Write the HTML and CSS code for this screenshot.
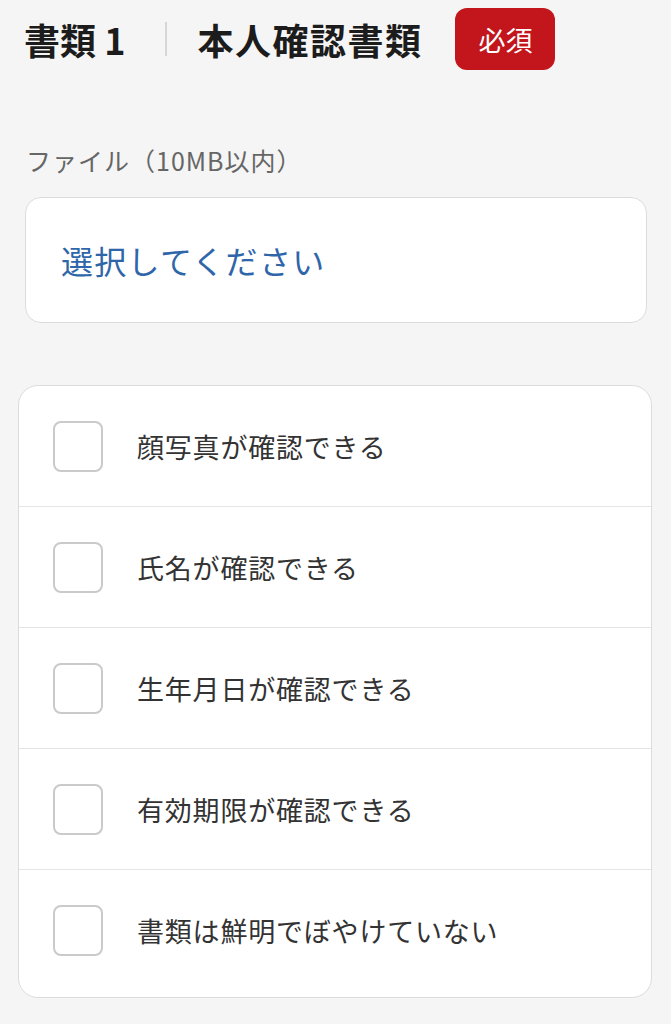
FILE: index.html
```html
<!DOCTYPE html>
<html lang="ja">
<head>
<meta charset="utf-8">
<link rel="stylesheet" href="styles.css">
</head>
<body>
<div class="page">
  <header class="doc-header">
    <span class="doc-num">書類 1</span>
    <span class="sep"></span>
    <span class="doc-title">本人確認書類</span>
    <span class="badge">必須</span>
  </header>

  <div class="field-label">ファイル（10MB以内）</div>
  <div class="select-box">選択してください</div>

  <ul class="checklist">
    <li class="check-row"><span class="checkbox"></span><span class="check-text">顔写真が確認できる</span></li>
    <li class="check-row"><span class="checkbox"></span><span class="check-text">氏名が確認できる</span></li>
    <li class="check-row"><span class="checkbox"></span><span class="check-text">生年月日が確認できる</span></li>
    <li class="check-row"><span class="checkbox"></span><span class="check-text">有効期限が確認できる</span></li>
    <li class="check-row"><span class="checkbox"></span><span class="check-text">書類は鮮明でぼやけていない</span></li>
  </ul>
</div>
</body>
</html>
```
FILE: styles.css
```css
* { box-sizing: border-box; }
html, body {
  margin: 0;
  padding: 0;
  background: #f5f5f5;
}
body {
  font-family: "Noto Sans CJK JP", "Noto Sans", sans-serif;
  color: #222;
}
.page {
  padding-top: 8px;
}
.doc-header {
  display: flex;
  align-items: center;
  height: 62px;
  padding-left: 24px;
}
.doc-num, .doc-title {
  font-size: 36px;
  font-weight: 700;
  color: #1c1c1c;
  line-height: 1;
}
.doc-title {
  letter-spacing: 1.5px;
}
.sep {
  width: 2px;
  height: 34px;
  background: #d6d6d6;
  margin: 0 30px 0 40px;
}
.badge {
  margin-left: 33px;
  width: 100px;
  height: 62px;
  border-radius: 12px;
  background: #c2161c;
  color: #fff;
  font-size: 27px;
  display: flex;
  align-items: center;
  justify-content: center;
}
.field-label {
  margin: 73px 0 0 26px;
  font-size: 25px;
  line-height: 34px;
  letter-spacing: 1px;
  color: #666;
}
.select-box {
  margin: 20px 24px 0 25px;
  height: 126px;
  background: #fff;
  border: 1.5px solid #dcdcdc;
  border-radius: 16px;
  display: flex;
  align-items: center;
  padding-left: 35px;
  font-size: 32px;
  letter-spacing: 1.3px;
  color: #2f66a9;
}
.checklist {
  list-style: none;
  margin: 62px 19px 0 18px;
  padding: 0;
  background: #fff;
  border: 1.5px solid #dcdcdc;
  border-radius: 20px;
  overflow: hidden;
}
.check-row {
  display: flex;
  align-items: center;
  gap: 34px;
  height: 121px;
  padding-left: 34px;
  border-bottom: 1px solid #e4e4e4;
}
.check-row:last-child {
  border-bottom: none;
  height: 127px;
  padding-bottom: 6px;
}
.checkbox {
  width: 50px;
  height: 51px;
  border: 2px solid #cacaca;
  border-radius: 8px;
  background: #fff;
  flex: none;
}
.check-text {
  font-size: 27px;
  letter-spacing: 0.8px;
  color: #333;
}
```
